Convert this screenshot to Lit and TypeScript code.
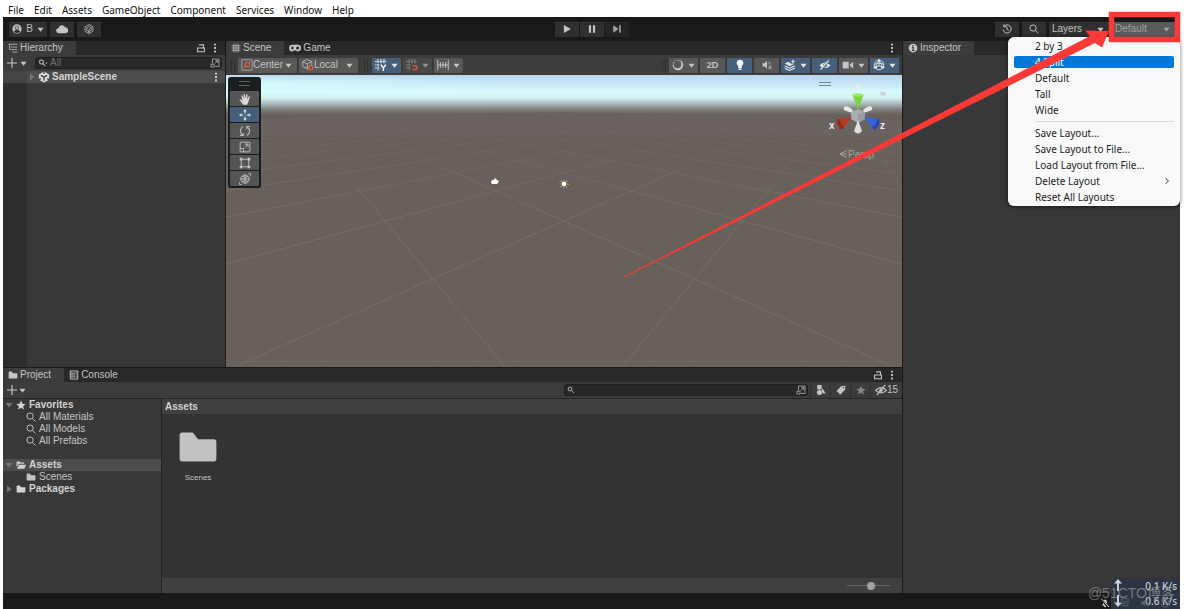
import { LitElement, html, svg, css, TemplateResult, SVGTemplateResult } from "lit";
import { customElement, property } from "lit/decorators.js";
import { classMap } from "lit/directives/class-map.js";

const ICONS: Record<string, SVGTemplateResult> = {
  user: svg`<circle cx="8" cy="8" r="7.5" fill="currentColor"/><circle cx="8" cy="6" r="3" fill="#303030"/><path d="M3 12.5c1-2.6 3-3 5-3s4 .4 5 3c-3 2.600-7 2.600-10 0z" fill="#303030"/><circle cx="8" cy="6" r="2" fill="currentColor"/>`,
  cloud: svg`<path d="M4 13.500a3.500 3.500 0 0 1-.5-7 4.500 4.500 0 0 1 8.500-.8 3.900 3.900 0 0 1 .6 7.800z" fill="currentColor"/>`,
  hexagon: svg`<g fill="none" stroke="currentColor" stroke-width="1.200"><path d="M8 .8l6.300 3.600v7.200L8 15.200l-6.300-3.600V4.400z"/><path d="M8 4l3.600 2v4L8 12.200 4.400 10V6z"/><path d="M8 15V8.500l2-1.200"/></g>`,
  play: svg`<path d="M3 1.500L14 8 3 14.500z" fill="currentColor"/>`,
  pause: svg`<path d="M3 2h3.500v12H3zM9.500 2H13v12H9.500z" fill="currentColor"/>`,
  step: svg`<path d="M2 2l8.500 6L2 14zM11.500 2H14v12h-2.500z" fill="currentColor"/>`,
  history: svg`<g fill="none" stroke="currentColor" stroke-width="1.600"><path d="M3 4a6.500 6.500 0 1 1-1.300 5"/><path d="M3 .8V4.600h4"/><path d="M8 4.500V8.500l3 1.800"/></g>`,
  search: svg`<g fill="none" stroke="currentColor" stroke-width="1.500"><circle cx="6.500" cy="6.500" r="5"/><path d="M10.300 10.300L15 15"/></g>`,
  find: svg`<g fill="none" stroke="currentColor" stroke-width="1.800"><circle cx="5.500" cy="6.500" r="3.200"/><path d="M8 9l3.500 3.500"/></g><path d="M11 7h4.500l-2.200 2.600z" fill="currentColor"/>`,
  lens: svg`<g fill="none" stroke="currentColor" stroke-width="2"><circle cx="6" cy="6" r="3.800"/><path d="M9 9l5 5"/></g>`,
  tree: svg`<path d="M1 2h14M4.500 6.500H15M4.500 10.500H15M7 14.500h8M2.500 2v8.500h2" fill="none" stroke="currentColor" stroke-width="1.200"/>`,
  lock: svg`<path d="M2.500 8h11v6h-11zM5 3h7v5" fill="none" stroke="currentColor" stroke-width="1.700"/>`,
  dots: svg`<path d="M6.500 1h3v3h-3zM6.500 6.500h3v3h-3zM6.500 12h3v3h-3z" fill="currentColor"/>`,
  plus: svg`<path d="M8 0v16M0 8h16" stroke="currentColor" stroke-width="1.800"/>`,
  caret: svg`<path d="M1 4h14L8 13z" fill="currentColor"/>`,
  right: svg`<path d="M4 1v14l9-7z" fill="currentColor"/>`,
  popout: svg`<g fill="none" stroke="currentColor" stroke-width="1.300"><path d="M4 9V1.500h10.500v12H8"/><path d="M1.500 10h5v4.500h-5zM7.500 9L12 4.500M8.500 4H12.200v4"/></g>`,
  unity: svg`<path d="M8 .8l6.800 3.800v7L8 15.400 1.200 11.600v-7z" fill="#dcdcdc"/><path d="M8 8.200V13M8 8.200L3.800 5.800M8 8.200l4.200-2.400M8 .8v3M1.200 11.600l2.600-1.500M14.800 11.600l-2.600-1.500" stroke="#404040" stroke-width="1.700"/>`,
  grid: svg`<path d="M4.500 1v14M8 1v14M11.500 1v14M1 4.500h14M1 8h14M1 11.500h14" stroke="currentColor" stroke-width="1.200"/>`,
  gamepad: svg`<path d="M4.500 3.500h7a4.500 4.500 0 0 1 0 9c-1.500 0-2-1.500-3.500-1.500s-2 1.500-3.500 1.500a4.500 4.500 0 0 1 0-9z" fill="currentColor"/><path d="M4.500 6v4M2.500 8h4" stroke="#282828" stroke-width="1.500"/><circle cx="11.500" cy="8" r="2" fill="#282828"/>`,
  pivot: svg`<rect x="1" y="1" width="14" height="14" rx="1" fill="none" stroke="#b0b0b0" stroke-width="1.100"/><g stroke="#e8603c" stroke-width="1.400" fill="none"><circle cx="8.500" cy="7.500" r="2.800"/><path d="M3.500 12.500l3-3M10.800 5.200l2.200-2.200"/></g>`,
  cube: svg`<path d="M7 .8l6 2.500v6L7 13l-6-3V3.500zM1 3.500L7 6.500l6-3M7 6.500V13" fill="none" stroke="#bbb" stroke-width="1.200"/><circle cx="11.500" cy="11.500" r="2.800" fill="#585858" stroke="#e8603c" stroke-width="1.600"/>`,
  snapGrid: svg`<path d="M4 0v15M8 0v6M12 0v6M0 3.500h15M0 8h7M0 12h7" stroke="currentColor" stroke-width="1.500" stroke-dasharray="2.500 .8"/><path d="M8 7.500l3.200 4.500 3.200-4.500M11.200 12V16" stroke="#fff" stroke-width="1.900" fill="none"/>`,
  magnet: svg`<path d="M4 0v15M8 0v6M12 0v6M0 3.500h15M0 8h7M0 12h7" stroke="currentColor" stroke-width="1.200" stroke-dasharray="2.500 1"/><path d="M8.500 9h3.500a2.500 2.500 0 0 1 0 5H8.500" stroke="#d0583a" stroke-width="2.200" fill="none"/>`,
  ruler: svg`<path d="M1 1v14M15 1v14M4.500 4v8M8 4v8M11.500 4v8M1 8h14" stroke="currentColor" stroke-width="1.300"/>`,
  sphere: svg`<circle cx="8" cy="8" r="7" fill="#c8c8c8"/><circle cx="7.300" cy="7" r="5.200" fill="#585858"/>`,
  bulb: svg`<path d="M8 1a4.500 4.500 0 0 1 2.500 8.300V12H5.500V9.300A4.500 4.500 0 0 1 8 1zM6 12.600h4v2H6z" fill="#f2f2f2"/>`,
  mute: svg`<path d="M2 5.500h2.500L8 2.500v10L4.500 10H2z" fill="currentColor"/><path d="M10 9l4 4.500M14 9l-4 4.500M10 4q2 1 2 3.500" stroke="currentColor" stroke-width="1.300" fill="none"/>`,
  layers: svg`<path d="M1 6l5-2.200 3 2.200 5 .3-6.500 3.200zM1 8.500v1.700L7.500 13l7-3V8.300l-7 2.900zM1 11.500v1.700L7.500 16l7-3v-1.700l-7 2.900z" fill="currentColor"/><path d="M12 0l1 2.500 2.500.5-2.500 1-1 2.500-1-2.500L8.500 3l2.500-.5z" fill="currentColor"/>`,
  hidden: svg`<path d="M.5 8.500Q8 .5 15.500 8.500 8 15.500.5 8.500z" fill="currentColor"/><circle cx="8" cy="8.200" r="2.500" fill="#46607c"/><path d="M3.500 14.500L14 2.500" stroke="#46607c" stroke-width="1.600"/><path d="M2 14L13 2" stroke="currentColor" stroke-width="1.600"/>`,
  hiddenLine: svg`<path d="M.8 8.500Q8 1 15.200 8.500 8 15 .8 8.500z" fill="none" stroke="currentColor" stroke-width="1.600"/><circle cx="8" cy="8.200" r="2.300" fill="currentColor"/><path d="M2.500 14.500L13.500 1.500" stroke="currentColor" stroke-width="1.700"/>`,
  camera: svg`<path d="M1 3.500h8v9H1zM10.500 7L15 3.500v9l-4.500-3.500z" fill="currentColor"/>`,
  gizmo: svg`<g fill="none" stroke="currentColor" stroke-width="1.200"><circle cx="8" cy="8" r="6.300"/><path d="M8 1v8L3 11M8 9l5 2M2 7q6-3 12 0M4.500 13q-1-6 3.500-11M11.500 13q1-6-3.500-11"/></g><circle cx="8" cy="2" r="1.600" fill="currentColor"/><circle cx="13.500" cy="11" r="1.700" fill="currentColor"/><circle cx="2.500" cy="11" r="1.700" fill="currentColor"/>`,
  muted: svg`<path d="M3 12q2-1.500 2-5 0-4 3-4.500Q11 3 11 7q0 3.500 2 5z" fill="currentColor"/><path d="M6.500 13.500h3" stroke="currentColor" stroke-width="2"/><path d="M1 1l13 14" stroke="#191919" stroke-width="3.500"/><path d="M2 1l12.500 13.500" stroke="currentColor" stroke-width="1.500"/>`,
  stack: svg`<g fill="none" stroke="currentColor" stroke-width="1.500"><ellipse cx="8" cy="3.500" rx="6.500" ry="2.500"/><path d="M1.500 7.500q6.500 4 13 0M1.500 11q6.500 4 13 0"/></g>`,
  info: svg`<circle cx="8" cy="8" r="7" fill="currentColor"/><path d="M8 3v2.300M6.300 7H8.200v4.500M6.200 11.800h4" stroke="#3c3c3c" stroke-width="2" fill="none"/>`,
  folder: svg`<path d="M1 3.500q0-1 1-1h4l2 2.500h6q1 0 1 1v6.500q0 1-1 1H2q-1 0-1-1z" fill="currentColor"/>`,
  folderOpen: svg`<path d="M1 11V3q0-.8.8-.8H6L7.500 4H13v2H4.500zM4.800 7.500H16L13.500 14H1.500z" fill="currentColor"/>`,
  console: svg`<path d="M2 1.500h12v13H2z" fill="none" stroke="currentColor" stroke-width="1.500"/><path d="M2 5h8M2 8h8M2 11h8" stroke="currentColor" stroke-width="1.500"/><path d="M11.500 3v10" stroke="currentColor" stroke-width="1.500" stroke-dasharray="2 1.500"/>`,
  star: svg`<path d="M8 .8l2.200 5 5.300.5-4 3.600 1.200 5.300L8 12.400l-4.700 2.800 1.200-5.300-4-3.600 5.300-.5z" fill="currentColor"/>`,
  shapes: svg`<path d="M2 0h7v7H2zM10.500 5l5 8.500h-4.500L9 9z" fill="currentColor"/><circle cx="5.500" cy="12" r="4" fill="currentColor"/>`,
  tag: svg`<path d="M8 2l7-1-.5 6.500-7.500 7.800L.8 9.500z" fill="currentColor"/><circle cx="11.800" cy="4.300" r="1.200" fill="#3c3c3c"/>`,
  hand: svg`<path d="M5.500 15.500C4 13 1.500 10.800.8 9.300c-.4-1 .9-1.500 1.700-.8l2 1.800L3.200 4c-.2-1.300 1.300-1.600 1.700-.4L6.300 8 6.200 2c0-1.300 1.700-1.300 1.800 0l.5 5.800L9.800 2.400c.3-1.200 1.800-.9 1.700.3l-.6 5.700 2-3.400c.6-1 1.900-.4 1.500.8-.9 3-1.700 6.200-3.400 9.700z" fill="#d8d8d8"/>`,
  move: svg`<path d="M8 0l2.300 3.200H5.700zM8 16l2.300-3.200H5.700zM0 8l3.200-2.300v4.600zM16 8l-3.200-2.300v4.600z" fill="#e4e4e4"/><path d="M8 3v3M8 10v3M3 8h3M10 8h3" stroke="#e4e4e4" stroke-width="1.500"/>`,
  rotate: svg`<g fill="none" stroke="currentColor" stroke-width="1.400"><path d="M5 13.500A6.500 6.500 0 0 1 5.500 2.200M11 2.500a6.500 6.500 0 0 1-.5 11.300"/><path d="M1.500 14H5.500V10.500M14.500 2h-4v3.500"/></g>`,
  scale: svg`<g fill="none" stroke="currentColor" stroke-width="1.200"><rect x="1.500" y="1.500" width="13" height="13" rx="1"/><path d="M1.500 10H6v4.500M7.500 8.500l4-4M8 4h4v4"/></g>`,
  rect: svg`<path d="M3 3h10v10H3z" fill="none" stroke="currentColor" stroke-width="1.200"/><path d="M1 1h3.500v3.500H1zM11.500 1H15v3.500h-3.500zM1 11.500h3.500V15H1zM11.500 11.500H15V15h-3.500z" fill="currentColor"/>`,
  transform: svg`<g fill="none" stroke="currentColor" stroke-width="1.200"><circle cx="8" cy="8" r="5.500"/><path d="M8 2v12M2 8h12M4 4.500q4 3 8 0M4 11.500q4-3 8 0M12.500 1H15.500V4M.5 12v3.500H4"/></g>`,
  chevron: svg`<path d="M5 2.500L11 8l-6 5.500" fill="none" stroke="currentColor" stroke-width="1.800"/>`,
};

const icon = (name: string, cls = ""): TemplateResult =>
  html`<svg class="ic ${cls}" viewBox="0 0 16 16" aria-hidden="true">${ICONS[name]}</svg>`;

const shared = css`
  * { box-sizing: border-box; }
  button, select, input {
    font: inherit; color: inherit; border: 0; margin: 0; padding: 0;
    background: none; border-radius: 0; outline: 0; appearance: none;
  }
  button { display: flex; align-items: center; justify-content: center; white-space: nowrap; }
  .ic { width: 10px; height: 10px; flex: none; display: block; }
  .ic.caret { width: 7px; height: 7px; }
  .ic.small { width: 8px; height: 8px; }
  .ic.large { width: 12px; height: 12px; }
  .bar { display: flex; align-items: center; }
  .tabs { display: flex; height: 14px; background: #282828; align-items: stretch; }
  .tab { gap: 2px; padding: 0 13px 0 5px; color: #c4c4c4; }
  .tab.active { background: #3c3c3c; border-radius: 2px 2px 0 0; }
  .end { margin-left: auto; display: flex; align-items: center; gap: 4px; padding-right: 5px; }
  .drop { display: grid; align-items: center; }
  .drop > * { grid-area: 1 / 1; }
  .drop > .ic { pointer-events: none; z-index: 1; }
  .drop > .caret { justify-self: end; margin-right: 5px; }
  .drop select { width: 100%; height: 100%; }
  .search { display: flex; align-items: center; height: 12px; background: #282828; border: 1px solid #1f1f1f; border-radius: 3px; color: #b0b0b0; padding: 0 1px 0 2px; gap: 2px; }
  .search input { flex: 1; min-width: 0; height: 10px; }
  .search input::placeholder { color: #707070; opacity: 1; }
`;

@customElement("scene-grid")
class SceneGrid extends LitElement {
  static styles = css`
    :host { display: block; overflow: hidden; background: #68605b; }
    svg { width: 100%; height: 100%; display: block; }
  `;

  /** Projects a ground point onto the 676 x 292 view. */
  private project(i: number, j: number): [number, number] {
    const w = 1 + 0.318 * (i + j);
    return [337.7 + (89.3 * (i - j)) / w, 21.7 + 124.3 / w];
  }

  private line(fixed: number, swap: boolean) {
    const near = -2.9 - fixed;
    const [a, b] = swap
      ? [this.project(near, fixed), this.project(60, fixed)]
      : [this.project(fixed, near), this.project(fixed, 60)];
    return svg`<line x1=${a[0].toFixed(1)} y1=${a[1].toFixed(1)} x2=${b[0].toFixed(1)} y2=${b[1].toFixed(1)} />`;
  }

  render() {
    const major: number[] = [];
    for (let n = -14; n <= 16; n++) major.push(n);
    const minor: number[] = [];
    for (let n = -40; n <= 20; n++) if (n % 10) minor.push(n / 10);
    return html`<svg viewBox="0 0 676 292" preserveAspectRatio="none" aria-label="Scene view" role="img">
      <defs>
        <linearGradient id="sky" x1="0" y1="0" x2="0" y2="1">
          <stop offset="0" stop-color="#b9d5ee" />
          <stop offset=".2" stop-color="#c6e4f4" />
          <stop offset=".42" stop-color="#d9fafd" />
          <stop offset=".58" stop-color="#d3efef" />
          <stop offset=".72" stop-color="#a9b9b8" />
          <stop offset=".87" stop-color="#7c7c79" />
          <stop offset="1" stop-color="#69625e" />
        </linearGradient>
        <radialGradient id="glow" cx="0" cy=".45" r=".5">
          <stop offset="0" stop-color="#d6ffff" stop-opacity=".9" />
          <stop offset="1" stop-color="#d6ffff" stop-opacity="0" />
        </radialGradient>
        <linearGradient id="fade" x1="0" y1="0" x2="0" y2="1">
          <stop offset=".12" stop-color="#000" />
          <stop offset=".3" stop-color="#888" />
          <stop offset=".5" stop-color="#fff" />
        </linearGradient>
        <mask id="m" maskUnits="userSpaceOnUse" x="0" y="0" width="676" height="292">
          <rect width="676" height="292" fill="url(#fade)" />
        </mask>
      </defs>
      <rect width="676" height="40" fill="url(#sky)" />
      <rect width="676" height="24" fill="url(#glow)" />
      <path d="M0 45Q338 30 676 45V60H0z" fill="#69625e" />
      <g mask="url(#m)">
        <g stroke="#85837f" stroke-opacity=".09">
          ${minor.map((n) => [this.line(n, false), this.line(n, true)])}
        </g>
        <g stroke="#85837f" stroke-opacity=".45">
          ${major.map((n) => [this.line(n, false), this.line(n, true)])}
        </g>
      </g>
      <path d="M265 107q1-3 3-2l1-2 2 2 2 1-2 3h-5z" fill="#fff" />
      <circle cx="338" cy="109" r="4" fill="none" stroke="#c8bd98" stroke-opacity=".7" stroke-width="1.500" stroke-dasharray="1 2" />
      <circle cx="338" cy="109" r="2.400" fill="#fffbe0" />
    </svg>`;
  }
}

@customElement("layout-menu")
class LayoutMenu extends LitElement {
  @property() current = "4 Split";
  static styles = [shared, css`
    :host { display: block; background: #f9f9f9; border-radius: 6px; padding: 1px 6px; box-shadow: 0 1px 4px #0008; color: #1b1b1b; font: 10px/16px "Noto Sans", sans-serif; }
    button { width: 100%; height: 16px; padding: 0 3px 0 21px; justify-content: space-between; }
    .sel { height: 12px; margin: 2px 0; background: #0078d7; color: #fff; border-radius: 2px; }
    hr { border: 0; height: 1px; background: #d8d8d8; margin: 3px 0 3px 22px; }
  `];
  render() {
    const item = (t: string, sub = false) => html`<button role="menuitem" class=${classMap({ sel: t === this.current })}>
      <span>${t}</span>${sub ? icon("chevron", "small") : ""}</button>`;
    return html`<div role="menu">
      ${["2 by 3", "4 Split", "Default", "Tall", "Wide"].map((t) => item(t))}
      <hr />
      ${["Save Layout...", "Save Layout to File...", "Load Layout from File..."].map((t) => item(t))}
      ${item("Delete Layout", true)}${item("Reset All Layouts")}
    </div>`;
  }
}

@customElement("app-root")
class AppRoot extends LitElement {
  static styles = [shared, css`
    :host { display: flex; flex-direction: column; position: relative; height: 100vh; overflow: hidden; background: #fff; color: #c4c4c4; font: 10px/12px "Liberation Sans", Arial, sans-serif; }
    .menubar { display: flex; gap: 10px; height: 17px; padding: 2px 8px 0; color: #111; font: 10px/14px "Noto Sans", sans-serif; }
    .editor { flex: 1; min-height: 0; display: flex; flex-direction: column; margin: 0 4px 0 3px; background: #191919; }
    .top { display: grid; grid-template-columns: 1fr auto 1fr; align-items: center; height: 24px; padding: 0 5px 0 6px; }
    .top .bar { gap: 3px; }
    .top button, .top .drop { height: 15px; background: #303030; min-width: 24px; gap: 6px; }
    .top .account { padding: 0 3px; gap: 4px; min-width: 38px; color: #bbb; }
    .top .play { gap: 1px; }
    .top .right { justify-content: flex-end; }
    .top .off { background: #242424; color: #a5a5a5; }
    .top select { padding-left: 3px; }
    .layers { width: 60px; }
    .top .default { width: 63px; background: #5a5a5a; color: #a0a0a0; }

    .work { flex: 1; min-height: 0; display: grid; grid-template-columns: minmax(0, 1fr) 277px; gap: 1px; }
    .left { display: grid; grid-template-rows: minmax(0, 1fr) 225px; gap: 1px; min-height: 0; }
    .upper { display: grid; grid-template-columns: 222px minmax(0, 1fr); gap: 1px; min-height: 0; }
    .panel { display: flex; flex-direction: column; background: #383838; min-height: 0; min-width: 0; }

    .htools { height: 16px; background: #3c3c3c; padding: 0 3px 0 4px; gap: 3px; }
    .htools .search { flex: 1; margin-left: 5px; }
    .hierarchy { flex: 1; background: linear-gradient(90deg, #2d2d2d 24px, #383838 24px); }
    .row { display: flex; align-items: center; gap: 2px; height: 12px; }
    .scene-row { background: linear-gradient(90deg, #444 24px, #4d4d4d 24px); padding: 0 4px 0 25px; font-weight: 700; color: #d2d2d2; }
    .scene-row .dots { margin-left: auto; }
    .tri { color: #777; }

    .stools { height: 20px; background: #3c3c3c; padding: 0 3px 0 5px; gap: 2px; }
    .stools button, .stools .drop { height: 15px; background: #585858; border-radius: 1px; }
    .stools .drop { width: 59px; }
    .stools select { padding-left: 15px; }
    .stools .drop > .ic:first-child { margin-left: 3px; }
    .grip { width: 4px; height: 11px; border: solid #2e2e2e; border-width: 0 1px; margin-right: 1px; }
    .stools .grip.gap { margin: 0 2px 0 4px; }
    .stools .split { width: 29px; gap: 4px; }
    .stools .one { width: 25px; }
    .stools .on { background: #46607c; color: #e4e4e4; }
    .stools .dim { background: #484848; color: #909090; }
    .stools .end { gap: 2px; padding: 0; }
    .stools .mode { font-weight: 700; font-size: 9px; }

    .stage { position: relative; flex: 1; min-height: 0; display: flex; }
    .stage scene-grid { flex: 1; }
    .palette { position: absolute; left: 2px; top: 2px; width: 33px; background: #1b1e1f; border-radius: 3px; padding: 0 2px 2px; display: grid; gap: 1px; }
    .palette::before { content: ""; height: 3px; margin: 4px 9px 4px; border: solid #58605f; border-width: 1px 0; }
    .palette button { height: 15px; background: #555; border-radius: 1px; }
    .palette .on { background: #46607c; }
    .orient { position: absolute; right: 2px; top: 2px; width: 86px; height: 84px; font: 700 10px "Liberation Sans", Arial, sans-serif; }

    .ptools { height: 17px; background: #3c3c3c; border-bottom: 1px solid #262626; padding: 0 0 0 4px; gap: 2px; }
    .ptools .search { width: 244px; margin-left: auto; }
    .filters { display: flex; align-items: stretch; height: 16px; }
    .filters button { width: 20px; border-left: 1px solid #303030; }
    .filters .fav { color: #858585; }
    .filters .count { width: 32px; }
    .browser { flex: 1; min-height: 0; display: grid; grid-template-columns: 158px minmax(0, 1fr); gap: 1px; background: #232323; }
    .folders { background: #383838; }
    .folders .row { padding-left: 2px; }
    .folders .strong { font-weight: 700; color: #d2d2d2; gap: 3px; }
    .folders .child { padding-left: 23px; gap: 3px; }
    .folders .spaced { margin-top: 12px; }
    .folders .sel { background: #4d4d4d; }
    .assets { display: flex; flex-direction: column; background: #333; }
    .assets h2 { margin: 0; height: 15px; padding: 0 3px; background: #404040; font: 700 10px/15px "Liberation Sans", Arial, sans-serif; color: #d2d2d2; }
    .files { flex: 1; padding: 12px; }
    .file { flex-direction: column; width: 48px; gap: 4px; font-size: 8px; }
    .file svg { width: 42px; height: 42px; color: #c2c2c2; }
    .foot { height: 15px; background: #404040; padding: 0 12px; justify-content: flex-end; }
    .foot input { width: 43px; height: 9px; background: linear-gradient(#666, #666) center / 100% 1px no-repeat; }
    .foot input::-webkit-slider-thumb { appearance: none; width: 8px; height: 8px; border-radius: 4px; background: #a0a0a0; }

    .status { height: 16px; background: #191919; }

    layout-menu { position: absolute; right: 4px; top: 37px; width: 172px; }
    .note { position: absolute; right: 0; top: 0; width: 564px; height: 290px; pointer-events: none; }
    .net { position: absolute; right: 4px; bottom: 0; width: 69px; height: 31px; padding: 1px 3px; display: grid; grid-template-columns: 10px 1fr; text-align: right; font: 500 10px/15px "Noto Sans", sans-serif; background: #2b3543; color: #c9d0d8; }
    .net svg { width: 8px; height: 28px; grid-row: 1 / 3; }
    .tray { position: absolute; right: 14px; bottom: 1px; display: flex; gap: 10px; color: #58646f; }
    .tray .lit { color: #ddd; }
    .mark { position: absolute; right: 9px; bottom: 7px; font: 14px/18px "Liberation Sans", "Noto Sans CJK SC", sans-serif; color: #a8a8a899; white-space: nowrap; }
  `];

  private select(cls: string, label: string, ic?: string) {
    return html`<label class="drop ${cls}">${ic ? icon(ic, "large") : ""}
      <select aria-label=${label}><option>${label}</option></select>${icon("caret", "caret")}</label>`;
  }

  private btn(label: string, ic: string, cls = "", size = "") {
    const split = cls.includes("split");
    return html`<button class=${cls} aria-label=${label}>${icon(ic, size)}${split ? icon("caret", "caret") : ""}</button>`;
  }

  private tools() {
    return html`<header class="top">
      <div class="bar">
        <button class="account" aria-label="Account">${icon("user")}<span>B</span>${icon("caret", "caret")}</button>
        ${this.btn("Cloud", "cloud", "", "large")}${this.btn("Packages", "hexagon")}
      </div>
      <div class="bar play">
        ${this.btn("Play", "play")}${this.btn("Pause", "pause")}${this.btn("Step", "step", "off")}
      </div>
      <div class="bar right">
        ${this.btn("History", "history")}${this.btn("Search", "search")}
        ${this.select("layers", "Layers")}${this.select("default", "Default")}
      </div>
    </header>`;
  }

  private hierarchy() {
    return html`<section class="panel">
      <div class="tabs">
        <button class="tab active">${icon("tree")}Hierarchy</button>
        <div class="end">${icon("lock")}${icon("dots")}</div>
      </div>
      <div class="bar htools">
        ${icon("plus")}${icon("caret", "caret")}
        <label class="search">${icon("find")}<input placeholder="All" aria-label="Search hierarchy" />${icon("popout")}</label>
      </div>
      <div class="hierarchy">
        <div class="row scene-row">${icon("right", "small tri")}${icon("unity", "large")}<span>SampleScene</span>${icon("dots", "dots")}</div>
      </div>
    </section>`;
  }

  private scene() {
    return html`<section class="panel">
      <div class="tabs">
        <button class="tab active">${icon("grid")}Scene</button>
        <button class="tab">${icon("gamepad", "large")}Game</button>
        <div class="end">${icon("dots")}</div>
      </div>
      <div class="bar stools">
        <span class="grip"></span>
        ${this.select("", "Center", "pivot")}${this.select("", "Local", "cube")}
        <span class="grip gap"></span>
        ${this.btn("Grid", "snapGrid", "split on", "large")}
        ${this.btn("Snap", "magnet", "split dim", "large")}
        ${this.btn("Snap increment", "ruler", "split", "large")}
        <div class="end">
          <span class="grip"></span>
          ${this.btn("Draw mode", "sphere", "split", "large")}
          <button class="one mode">2D</button>
          ${this.btn("Lighting", "bulb", "one on", "large")}
          ${this.btn("Audio", "mute", "one", "large")}
          ${this.btn("Effects", "layers", "split on", "large")}
          ${this.btn("Visibility", "hidden", "one on", "large")}
          ${this.btn("Camera", "camera", "split", "large")}
          ${this.btn("Gizmos", "gizmo", "split on", "large")}
        </div>
      </div>
      <div class="stage">
        <scene-grid></scene-grid>
        <div class="palette">
          ${["hand", "move", "rotate", "scale", "rect", "transform"].map((n) => html`<button aria-label=${n} class=${classMap({ on: n === "move" })}>${icon(n, "large")}</button>`)}
        </div>
        <svg class="orient" viewBox="814 77 86 84">
          <path d="M819 82.500h12M819 85.500h12" stroke="#6f8585" />
          <path d="M852 113l-8-3q-1-3 2-4 4 1 7 4zM864 113l8-3q1-3-2-4-4 1-7 4z" fill="#e6e6e6" />
          <path d="M851 112l7-3 7 3v7l-7 4-7-4z" fill="#a9acb0" /><path d="M858 115l7-3v7l-7 4z" fill="#989b9f" />
          <path d="M858 120l-4 11q4 5 8 0z" fill="#dedede" />
          <path d="M852.500 95h11L858 109z" fill="#7ed23c" /><ellipse cx="858" cy="95" rx="5.500" ry="1.800" fill="#9be862" />
          <path d="M852 117l-15 2q-1 7 5 11z" fill="#b53a28" /><path d="M837 119q-1 7 5 11l2-3q-4-3-4-8z" fill="#8f2c1e" />
          <path d="M864 117l15 2q2 7-5 11z" fill="#3566dd" /><path d="M879 119q2 7-5 11l-2-3q5-3 5-8z" fill="#2448a8" />
          <path d="M880.500 92h5v3.500h-5z" fill="#c6d2d2" />
          <g fill="#eee"><text x="855" y="90">y</text><text x="829" y="129">x</text><text x="880" y="129">z</text></g>
          <path d="M847 150.500l-7 3.500 7 3.500M840 154h7" stroke="#aaa5a2" fill="none" />
          <text x="848" y="158" fill="#aaa5a2" font-size="10" font-weight="400">Persp</text>
        </svg>
      </div>
    </section>`;
  }

  private project() {
    return html`<section class="panel">
      <div class="tabs">
        <button class="tab active">${icon("folder")}Project</button>
        <button class="tab">${icon("console")}Console</button>
        <div class="end">${icon("lock")}${icon("dots")}</div>
      </div>
      <div class="bar ptools">
        ${icon("plus")}${icon("caret", "caret")}
        <label class="search">${icon("lens", "small")}<input aria-label="Search project" />${icon("popout")}</label>
        <div class="filters">
          ${this.btn("Filter by type", "shapes")}${this.btn("Filter by label", "tag")}${this.btn("Favorite", "star", "fav")}
          <button class="count" aria-label="Hidden packages">${icon("hiddenLine", "large")}15</button>
        </div>
      </div>
      <div class="browser">
        <nav class="folders">
          <div class="row strong">${icon("caret", "small tri")}${icon("star")}Favorites</div>
          ${["All Materials", "All Models", "All Prefabs"].map((t) => html`<div class="row child">${icon("search")}${t}</div>`)}
          <div class="row strong spaced sel">${icon("caret", "small tri")}${icon("folderOpen")}Assets</div>
          <div class="row child">${icon("folder")}Scenes</div>
          <div class="row strong">${icon("right", "small tri")}${icon("folder")}Packages</div>
        </nav>
        <div class="assets">
          <h2>Assets</h2>
          <div class="files"><button class="file">${icon("folder")}<span>Scenes</span></button></div>
          <div class="bar foot"><input type="range" min="0" max="100" value="58" aria-label="Icon size" /></div>
        </div>
      </div>
    </section>`;
  }

  render() {
    return html`
      <nav class="menubar">${["File", "Edit", "Assets", "GameObject", "Component", "Services", "Window", "Help"].map((t) => html`<button>${t}</button>`)}</nav>
      <main class="editor">
        ${this.tools()}
        <div class="work">
          <div class="left">
            <div class="upper">${this.hierarchy()}${this.scene()}</div>
            ${this.project()}
          </div>
          <section class="panel">
            <div class="tabs"><button class="tab active">${icon("info")}Inspector</button></div>
          </section>
        </div>
        <footer class="status"></footer>
      </main>
      <layout-menu></layout-menu>
      <div class="net">
        <svg viewBox="0 0 8 28"><path d="M4 0l4 4.500H5V12H3V4.500H0zM4 28l4-4.500H5V16H3v7.500H0z" fill="#c9d0d8" /></svg>
        <span>0.1 K/s</span><span>0.6 K/s</span>
      </div>
      <div class="tray">${icon("muted", "lit")}${icon("stack")}${icon("mute")}${icon("history")}</div>
      <div class="mark">@51CTO博客</div>
      <svg class="note" viewBox="620 0 564 290">
        <path d="M623 277L1090 36L1085 30.500L1109 31L1102 47.500L1095 43L624 277.500z" fill="#fb3a38" />
        <rect x="1111.500" y="14.500" width="66" height="25" fill="none" stroke="#fb3a38" stroke-width="5.500" />
      </svg>
    `;
  }
}
